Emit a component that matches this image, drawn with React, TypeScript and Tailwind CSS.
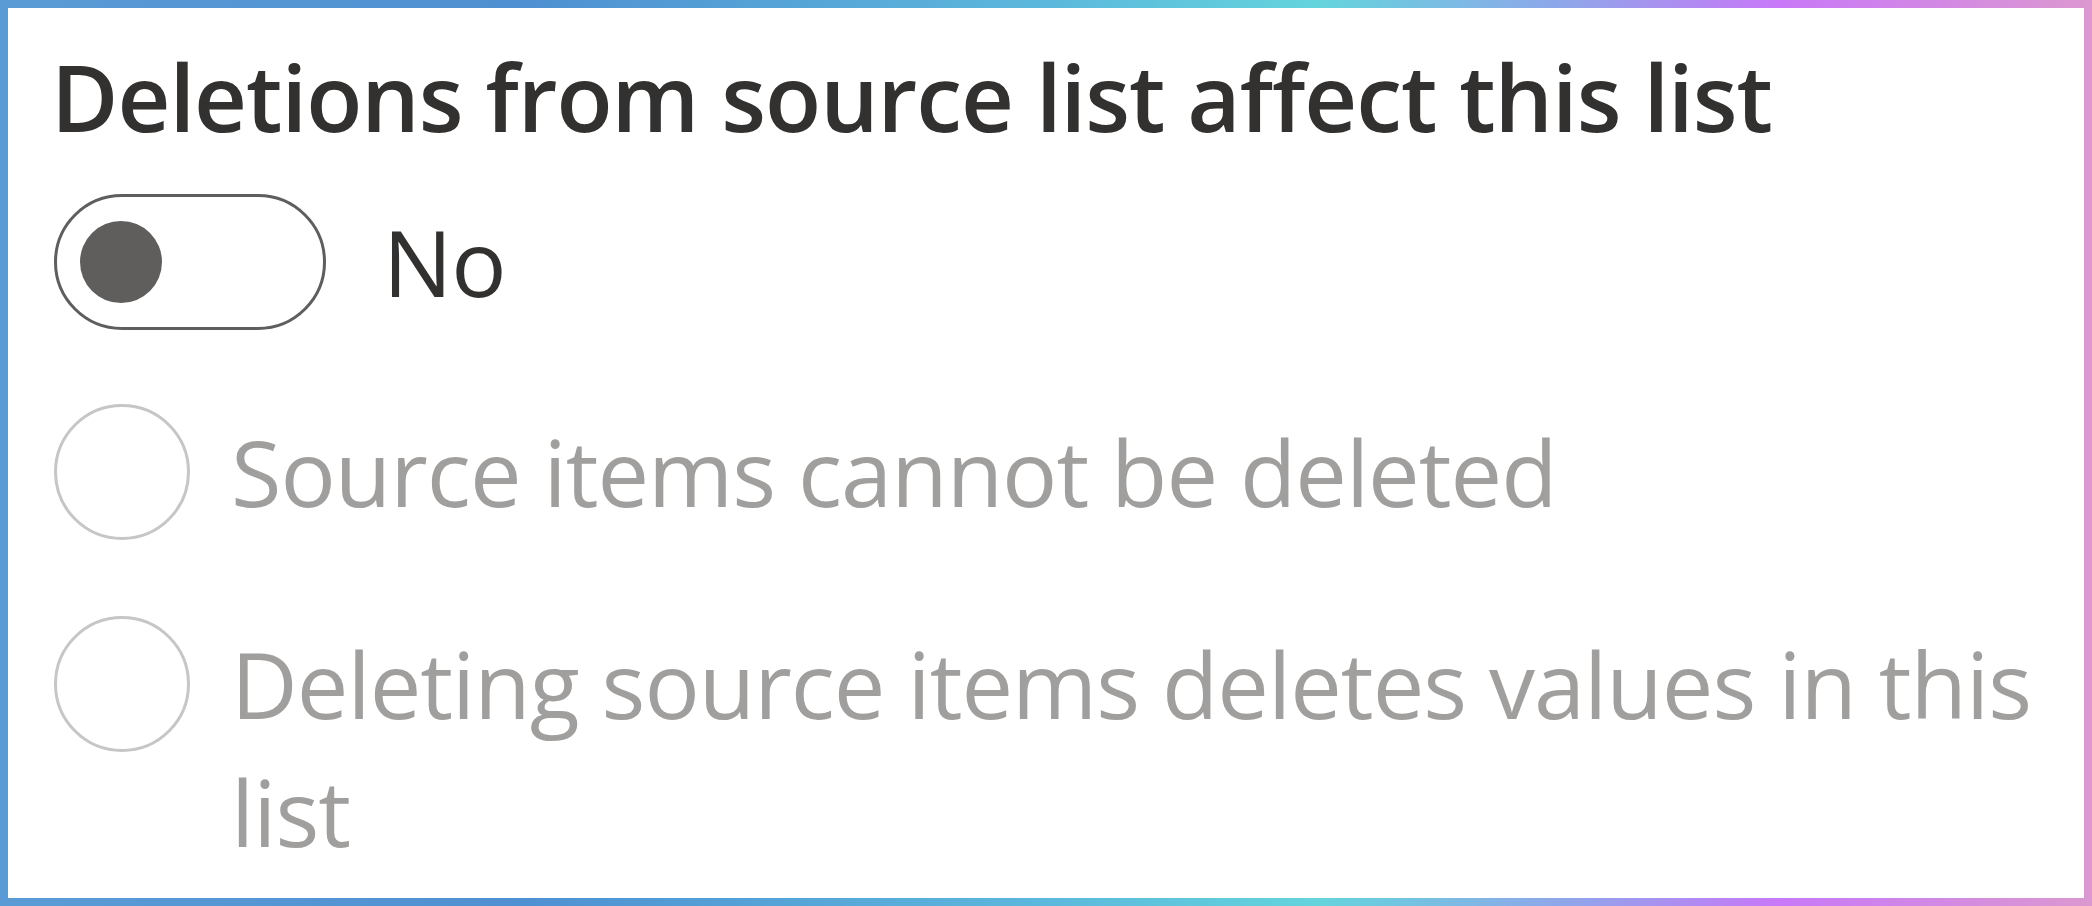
import { useState } from 'react';

const font = { fontFamily: '"Open Sans", "Noto Sans", sans-serif' };

function Radio({ label }: { label: string }) {
    return (
        <div className="flex items-start">
            <span className="shrink-0 w-[136px] h-[136px] rounded-full border-[3px] border-[#c8c6c4] bg-white" />
            <span className="ml-[41px] pt-[4px] text-[92px] leading-[128px] tracking-[-1px] text-[#a19f9d]">
                {label}
            </span>
        </div>
    );
}

export default function App() {
    const [on, setOn] = useState(false);

    return (
        <div className="w-full h-[906px] p-2 bg-[linear-gradient(90deg,#5b9bd5_0%,#4f90d2_25%,#5cb8dc_50%,#64d4dc_63%,#90a5ea_75%,#c878f8_85%,#dc98d0_100%)]">
            <div className="h-full bg-white pl-[46px] pr-[40px] pt-[25px]" style={font}>
                <h2 className="-ml-[3px] text-[92px] leading-[128px] font-semibold tracking-[-1px] text-[#323130]">
                    Deletions from source list affect this list
                </h2>

                <div className="mt-[33px] flex items-center">
                    <button
                        onClick={() => setOn(!on)}
                        className="w-[272px] h-[136px] rounded-full border-[3px] border-[#605e5c] bg-white flex items-center pl-[23px]"
                    >
                        <span className="w-[82px] h-[82px] rounded-full bg-[#605e5c]" />
                    </button>
                    <span className="ml-[57px] text-[92px] leading-[128px] tracking-[-1px] text-[#323130]">
                        {on ? 'Yes' : 'No'}
                    </span>
                </div>

                <div className="mt-[74px]">
                    <Radio label="Source items cannot be deleted" />
                </div>
                <div className="mt-[76px]">
                    <Radio label="Deleting source items deletes values in this list" />
                </div>
            </div>
        </div>
    );
}
